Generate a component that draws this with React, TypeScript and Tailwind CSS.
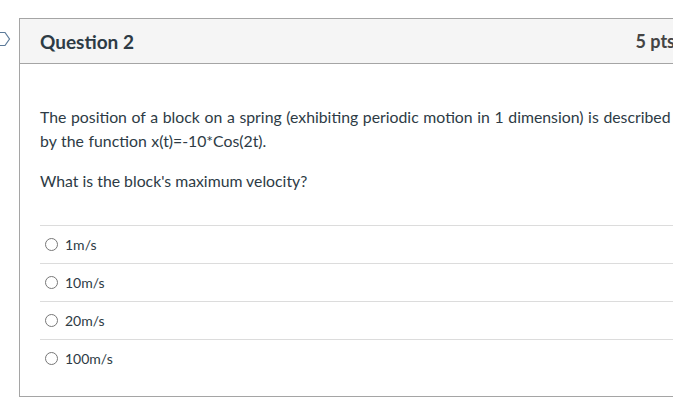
import React from 'react'

const answers = ['1m/s', '10m/s', '20m/s', '100m/s']

export default function App() {
  return (
    <div
      className="relative w-[673px] h-[401px] overflow-hidden bg-white text-[#2d3b45]"
      style={{ fontFamily: 'Lato, "Open Sans", sans-serif' }}
    >
      {/* flag marker */}
      <svg
        className="absolute left-0 top-[31px]"
        width="12"
        height="16"
        viewBox="0 0 12 16"
        fill="none"
      >
        <path d="M-2 1.5 H5 L9.5 8 L5 14.5 H-2" stroke="#5b7a99" strokeWidth="1.2" />
      </svg>

      <div className="pt-[18px] pl-[19px]">
        <div className="w-[680px] border border-[#a5a5a5]">
          <div className="h-[45px] bg-[#f5f5f5] border-b border-[#a5a5a5] flex items-center justify-between pl-[20px] pr-[23px]">
            <h2 className="text-[19px] font-bold leading-none">Question 2</h2>
            <span className="text-[18px] font-bold text-[#444]">5 pts</span>
          </div>

          <div className="pl-[20px] pr-[20px] pt-[41px] pb-[19px]">
            <p className="max-w-[636px] text-[15.8px] leading-[24px] [word-spacing:0.6px]">
              The position of a block on a spring (exhibiting periodic motion in 1 dimension) is described by the
              function x(t)=-10*Cos(2t).
            </p>
            <p className="text-[15.8px] leading-[24px] mt-[16px]">What is the block's maximum velocity?</p>

            <div className="mt-[32px]">
              {answers.map((a) => (
                <div key={a} className="h-[38px] border-t border-[#dcdcdc] flex items-center pl-[5px]">
                  <span className="w-[13px] h-[13px] rounded-full border border-[#777] bg-white" />
                  <span className="ml-[7px] text-[14px] -mt-[1px]">{a}</span>
                </div>
              ))}
            </div>
          </div>
        </div>
      </div>
    </div>
  )
}
